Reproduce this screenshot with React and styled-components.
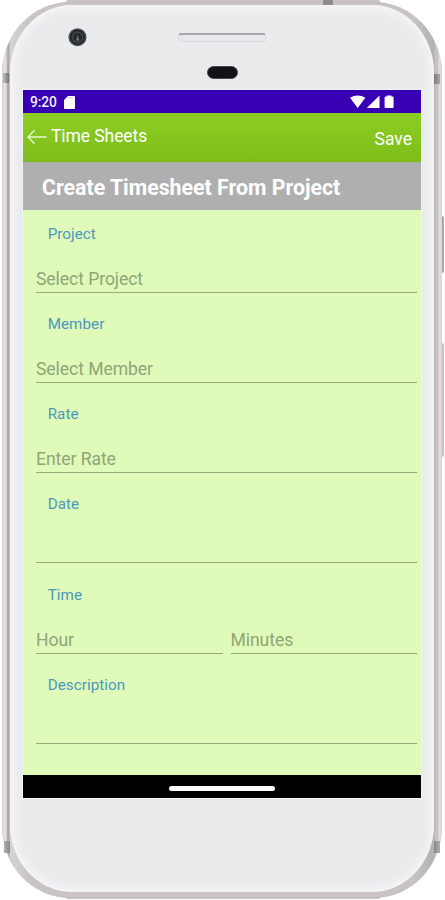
import React from "react"
import styled, { createGlobalStyle } from "styled-components"

const GlobalStyle = createGlobalStyle`
  * {
    box-sizing: border-box;
  }
  body {
    margin: 0;
    background: #fff;
    font-family: Roboto, "Liberation Sans", sans-serif;
  }
`

const Stage = styled.div`
  position: relative;
  width: 445px;
  height: 900px;
  padding: 2px 3px 0 2px;
  overflow: hidden;
`

// metal edge of the phone
const Frame = styled.div`
  position: relative;
  height: 896px;
  padding: 3px 8px 6px;
  border-radius: 68px / 72px;
  background: linear-gradient(
    90deg,
    #d8d0d3 0,
    #e6dee1 2px,
    #e8e1e4 4px,
    #b7b3b6 5px,
    #aaa6a9 7px,
    #d5d2d5 8px,
    #c9c3c5 30px,
    #c9c3c5 410px,
    #b4b2b5 431px,
    #b8b5b8 433px,
    #d5d1d4 434px,
    #b8b2b6 435px,
    #e5dce0 437px,
    #e3d7dc 440px
  );
  box-shadow: inset 0 0 1px #b5aeb1;
`

const Face = styled.div`
  height: 887px;
  padding: 0 13px 0 13px;
  border-radius: 62px / 68px;
  background: #e9ebed;
  box-shadow: inset 0 0 7px 4px #f6f5f8;
`

const TopBezel = styled.div`
  display: grid;
  grid-template-columns: 110px 178px 1fr;
  height: 85px;
  padding-top: 23px;
`

const Camera = styled.svg`
  display: block;
  margin-left: 45px;
`

const EarPiece = styled.div`
  display: flex;
  flex-direction: column;
  align-items: center;
  padding-top: 5px;
`

const Speaker = styled.div`
  width: 88px;
  height: 9px;
  border: 1px solid #dcdee1;
  border-top: 2px solid #a4a7ac;
  border-radius: 3px;
  background: #e6e8ea;
`

const Sensor = styled.div`
  width: 31px;
  height: 13px;
  margin-top: 24px;
  border: 1px solid #45494b;
  border-radius: 7px;
  background: #111416;
`

const Screen = styled.div`
  width: 398px;
  height: 708px;
  display: flex;
  flex-direction: column;
  box-shadow: 0 0 0 1px #f2f1f6;
`

const StatusBar = styled.div`
  display: flex;
  align-items: center;
  height: 23px;
  padding: 1px 25px 0 7px;
  background: #3700b3;
  color: #f3effb;
  font-size: 13.8px;
  font-weight: 500;
  letter-spacing: -0.1px;
`

const SdCard = styled.svg`
  margin-left: 7px;
`

const Signals = styled.svg`
  margin-left: auto;
`

const Toolbar = styled.div`
  display: flex;
  align-items: flex-start;
  height: 49px;
  padding: 0 9px 0 3px;
  background: linear-gradient(#8dce24, #7fbc1b);
  color: #fff;
`

const BackArrow = styled.svg`
  margin: 16px 4px 0 1px;
`

const ToolbarText = styled.span`
  margin-top: ${({ $top }) => $top}px;
  margin-left: ${({ $end }) => ($end ? "auto" : 0)};
  font-size: 17.5px;
  line-height: 22px;
  letter-spacing: ${({ $end }) => ($end ? 0 : -0.08)}px;
`

const TitleBar = styled.h1`
  height: 48px;
  margin: 0;
  padding-left: 19px;
  background: #afafaf;
  color: #fff;
  font-size: 21.3px;
  font-weight: 700;
  line-height: 52px;
`

const Form = styled.div`
  flex: 1;
  padding: 0 4px 0 13px;
  background: #e0fab9;
`

const Field = styled.div`
  height: 90.15px;
`

const Label = styled.div`
  height: 48px;
  padding: 14px 0 0 11.7px;
  color: #4a98be;
  font-size: 15.2px;
  line-height: 21px;
  letter-spacing: 0.05px;
`

const Inputs = styled.div`
  display: flex;
  gap: 8px;
`

const Input = styled.div`
  flex: 1;
  height: 35px;
  padding-top: 10px;
  border-bottom: 1px solid #97ab7b;
  color: #91a478;
  font-size: 17.6px;
  line-height: 22px;
  letter-spacing: -0.08px;
`

const NavBar = styled.div`
  display: flex;
  align-items: center;
  justify-content: center;
  height: 23px;
  padding-top: 4px;
  background: #000;
`

const HomePill = styled.div`
  width: 106px;
  height: 5px;
  border-radius: 3px;
  background: #fff;
`

// raised metal strip along the top and bottom edge
const EdgeStrip = styled.div`
  position: absolute;
  left: 66px;
  top: ${({ $y }) => $y}px;
  width: 314px;
  height: 3px;
  border-radius: 2px;
  background: #c9c3c5;
`

// antenna lines that lie on the metal edge
const Antenna = styled.div`
  position: absolute;
  left: ${({ $x }) => $x}px;
  top: ${({ $y }) => $y}px;
  width: ${({ $w }) => $w}px;
  height: ${({ $h }) => $h}px;
  background: linear-gradient(90deg, ${({ $from }) => $from}, ${({ $to }) => $to});
`

const SideButton = styled.div`
  position: absolute;
  left: 442px;
  top: ${({ $y }) => $y}px;
  width: 2px;
  height: ${({ $h }) => $h}px;
  border-radius: 0 2px 2px 0;
  background: ${({ $color }) => $color};
`

const fields = [
  { label: "Project", inputs: ["Select Project"] },
  { label: "Member", inputs: ["Select Member"] },
  { label: "Rate", inputs: ["Enter Rate"] },
  { label: "Date", inputs: [""] },
  { label: "Time", inputs: ["Hour", "Minutes"] },
  { label: "Description", inputs: [""] },
]

const App = () => {
  return (
    <>
      <GlobalStyle />
      <Stage>
        <EdgeStrip $y={0} />
        <EdgeStrip $y={896} />
        <Frame>
          <Face>
            <TopBezel>
              <Camera width="19" height="19" viewBox="0 0 19 19">
                <circle cx="9.5" cy="9.2" r="9" fill="#4c5052" />
                <circle cx="9.5" cy="9.2" r="7.6" fill="#24282a" />
                <circle cx="9.5" cy="9.2" r="5.6" fill="#4c5052" />
                <circle cx="9.5" cy="9.2" r="4.6" fill="#25292b" />
                <path d="M9.5 7l1.800 5.500h-3z" fill="#75797a" />
              </Camera>
              <EarPiece>
                <Speaker />
                <Sensor />
              </EarPiece>
            </TopBezel>

            <Screen>
              <StatusBar>
                9:20
                <SdCard width="11" height="13" viewBox="0 0 11 13">
                  <path d="M4 0h6q1 0 1 1v11q0 1-1 1H1q-1 0-1-1V4z" fill="#fff" />
                  <path d="M4.500 1.800h4.500" stroke="#b9a5e4" strokeWidth=".8" />
                </SdCard>
                <Signals width="46" height="14" viewBox="0 0 46 14">
                  <path d="M0 2.800Q7.700-2 15.400 2.800L7.700 13z" fill="#fff" />
                  <path d="M29.500.5V13H16.800z" fill="#fff" />
                  <path d="M36.800 1.500V.5h4.600v1h1.200q1 0 1 1V12q0 1-1 1h-7q-1 0-1-1V2.500q0-1 1-1z" fill="#fff" />
                </Signals>
              </StatusBar>

              <Toolbar>
                <BackArrow width="20" height="16" viewBox="0 0 20 16" fill="none" stroke="#e4f5cb" strokeWidth="1.4">
                  <path d="M19.500 8H1M7.500 1.300L1 8l6.500 6.700" />
                </BackArrow>
                <ToolbarText $top={12}>Time Sheets</ToolbarText>
                <ToolbarText $top={15} $end>
                  Save
                </ToolbarText>
              </Toolbar>

              <TitleBar>Create Timesheet From Project</TitleBar>

              <Form>
                {fields.map(({ label, inputs }) => (
                  <Field key={label}>
                    <Label>{label}</Label>
                    <Inputs>
                      {inputs.map((hint, i) => (
                        <Input key={i}>{hint}</Input>
                      ))}
                    </Inputs>
                  </Field>
                ))}
              </Form>

              <NavBar>
                <HomePill />
              </NavBar>
            </Screen>
          </Face>
        </Frame>

        <Antenna $x={3} $y={73} $w={6} $h={10} $from="#c3bfc1" $to="#727073" />
        <Antenna $x={434} $y={74} $w={6} $h={10} $from="#7c7a7c" $to="#aaa6a8" />
        <Antenna $x={323} $y={0} $w={10} $h={5} $from="#8c888b" $to="#8c888b" />
        <Antenna $x={4} $y={841} $w={6} $h={12} $from="#b3afb1" $to="#8a888a" />
        <Antenna $x={434} $y={841} $w={6} $h={12} $from="#8a888a" $to="#b3afb1" />
        <SideButton $y={216} $h={57} $color="#aaa7a9" />
        <SideButton $y={343} $h={114} $color="#c9c5c7" />
      </Stage>
    </>
  )
}

export default App
